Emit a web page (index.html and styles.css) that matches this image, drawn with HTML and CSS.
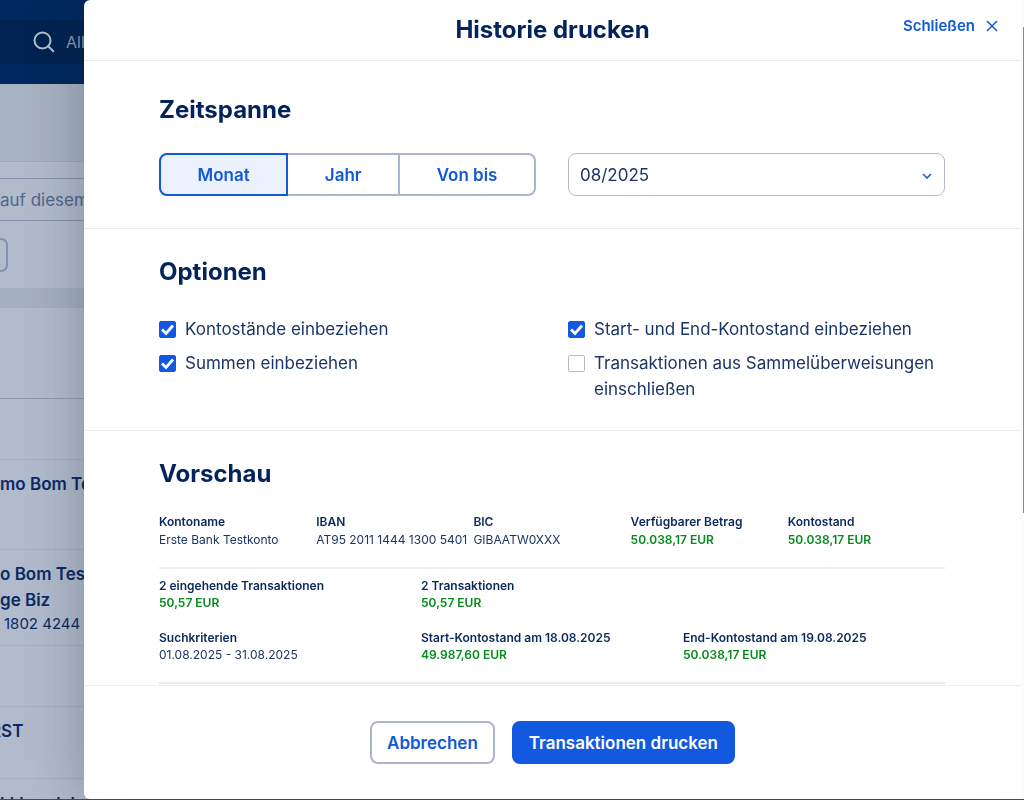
FILE: index.html
```html
<!DOCTYPE html>
<html lang="de">
<head>
<meta charset="utf-8">
<title>Historie drucken</title>
<link rel="stylesheet" href="styles.css">
</head>
<body>
<div class="page">
  <div class="topbar">
    <div class="search">
      <svg class="search-icon" viewBox="0 0 22 22" aria-hidden="true"><circle cx="9.500" cy="9.500" r="8"/><path d="M15.300 15.300l5 5"/></svg>
      <span>All</span>
    </div>
  </div>
  <div class="banner"></div>
  <div class="filters">
    <div class="filter-input">auf diesem</div>
    <div class="filter-chip"></div>
  </div>
  <div class="spacer"></div>
  <ul class="rows">
    <li class="row row-head"></li>
    <li class="row row-date"></li>
    <li class="row row-single"><strong>mo Bom Te</strong></li>
    <li class="row row-multi"><strong>o Bom Test</strong><strong>ge Biz</strong><span>1802 4244</span></li>
    <li class="row row-date"></li>
    <li class="row row-short"><strong>RST</strong></li>
    <li class="row row-last"><strong>kkhandeln</strong></li>
  </ul>
</div>

<div class="dialog" role="dialog" aria-labelledby="dialog-title">
  <header class="dialog-header">
    <h1 id="dialog-title">Historie drucken</h1>
    <button class="close" type="button">Schließen
      <svg viewBox="0 0 12 12" aria-hidden="true"><path d="M1 1l10 10M11 1L1 11"/></svg>
    </button>
  </header>
  <main class="dialog-body">
    <section class="section section-first">
      <h2>Zeitspanne</h2>
      <div class="columns">
        <div class="segments">
          <button class="segment active" type="button" aria-pressed="true">Monat</button>
          <button class="segment" type="button">Jahr</button>
          <button class="segment" type="button">Von bis</button>
        </div>
        <div class="select-wrap">
          <select aria-label="Monat"><option>08/2025</option></select>
          <svg class="chevron" viewBox="0 0 10 6" aria-hidden="true"><path d="M1 1l4 4 4-4"/></svg>
        </div>
      </div>
    </section>
    <section class="section">
      <h2>Optionen</h2>
      <div class="columns options">
        <label class="option"><input type="checkbox" checked><svg viewBox="0 0 17 17" aria-hidden="true"><path d="M3 8.500l4 4 7-8"/></svg><span>Kontostände einbeziehen</span></label>
        <label class="option"><input type="checkbox" checked><svg viewBox="0 0 17 17" aria-hidden="true"><path d="M3 8.500l4 4 7-8"/></svg><span>Start- und End-Kontostand einbeziehen</span></label>
        <label class="option"><input type="checkbox" checked><svg viewBox="0 0 17 17" aria-hidden="true"><path d="M3 8.500l4 4 7-8"/></svg><span>Summen einbeziehen</span></label>
        <label class="option"><input type="checkbox"><span>Transaktionen aus Sammelüberweisungen einschließen</span></label>
      </div>
    </section>
    <section class="section section-preview">
      <h2>Vorschau</h2>
      <dl class="facts facts-five">
        <div><dt>Kontoname</dt><dd>Erste Bank Testkonto</dd></div>
        <div><dt>IBAN</dt><dd>AT95 2011 1444 1300 5401</dd></div>
        <div><dt>BIC</dt><dd>GIBAATW0XXX</dd></div>
        <div><dt>Verfügbarer Betrag</dt><dd class="amount">50.038,17 EUR</dd></div>
        <div><dt>Kontostand</dt><dd class="amount">50.038,17 EUR</dd></div>
      </dl>
      <dl class="facts facts-three">
        <div><dt>2 eingehende Transaktionen</dt><dd class="amount">50,57 EUR</dd></div>
        <div class="span-two"><dt>2 Transaktionen</dt><dd class="amount">50,57 EUR</dd></div>
        <div><dt>Suchkriterien</dt><dd>01.08.2025 - 31.08.2025</dd></div>
        <div><dt>Start-Kontostand am 18.08.2025</dt><dd class="amount">49.987,60 EUR</dd></div>
        <div><dt>End-Kontostand am 19.08.2025</dt><dd class="amount">50.038,17 EUR</dd></div>
      </dl>
    </section>
  </main>
  <footer class="dialog-footer">
    <button class="btn" type="button">Abbrechen</button>
    <button class="btn btn-primary" type="button">Transaktionen drucken</button>
  </footer>
</div>
<div class="scrollbar" aria-hidden="true"><div class="thumb"></div></div>
</body>
</html>
```

FILE: styles.css
```css
* { box-sizing: border-box; }
body {
  margin: 0;
  height: 100vh;
  overflow: hidden;
  background: #4d4f55;
  color: #1b3566;
  font-family: Inter, sans-serif;
  font-size: 17px;
  line-height: 26px;
}
button, select, input { font: inherit; color: inherit; margin: 0; }
h1, h2, dl, dd, ul { margin: 0; padding: 0; }
h1, h2 { color: #02235b; font-size: 24px; font-weight: 650; line-height: 30px; }
svg { fill: none; stroke: currentColor; }

/* Account page under the dialog */
.page {
  height: calc(100vh - 1px);
  overflow: hidden;
  background: #b1bbcc;
  color: #0b2a63;
  white-space: nowrap;
}
.topbar { padding: 20px 0; background: #01285e; }
.search {
  display: flex;
  align-items: center;
  gap: 11px;
  height: 44px;
  padding-left: 33px;
  background: #012351;
  color: #8f9bb0;
  font-size: 16px;
}
.search-icon { width: 22px; height: 22px; stroke: #b4c0d0; stroke-width: 2; stroke-linecap: round; }
.banner { height: 78px; background: #a7b2c2; border-bottom: 1px solid #9ea9b8; }
.filters { padding: 16px 0; }
.filter-input {
  height: 43px;
  border: solid #8493ad;
  border-width: 1px 0;
  color: #52658a;
  line-height: 42px;
}
.filter-chip {
  width: 8px;
  height: 34px;
  margin-top: 17px;
  border: solid #8092b2;
  border-width: 2px 2px 2px 0;
  border-radius: 0 7px 7px 0;
}
.spacer { height: 20px; background: #a4afc0; }
.rows { list-style: none; }
.row { display: flex; flex-direction: column; border-bottom: 1px solid #a3aebf; }
.row strong { font-weight: 600; }
.row-head { height: 91px; border-color: #8d9ab0; }
.row-date { height: 61px; }
.row-single { height: 90px; padding-top: 11px; }
.row-multi { padding: 11px 0; }
.row-multi span { padding-left: 4px; font-size: 15px; line-height: 21px; }
.row-short { height: 72px; margin-left: -10px; padding-top: 11px; }
.row-last { padding-top: 12px; }

/* Dialog */
.dialog {
  position: fixed;
  inset: 0 3px 1px 84px;
  display: grid;
  grid-template-rows: auto 1fr auto;
  background: #fff;
  border-radius: 6px 0 0 6px;
  box-shadow: 0 0 56px rgba(20, 30, 50, .3);
}
.dialog-header {
  display: grid;
  grid-template-columns: 1fr auto 1fr;
  padding: 15px 23px;
  border-bottom: 1px solid #ececef;
}
.dialog-header h1 { grid-column: 2; }
.close {
  display: flex;
  align-items: center;
  justify-self: end;
  gap: 11px;
  height: 22px;
  padding: 0;
  border: 0;
  background: none;
  color: #1259d6;
  font-size: 15px;
  font-weight: 600;
}
.close svg { width: 12px; height: 12px; stroke-width: 1.5; }
.dialog-body { overflow: hidden; }
.section { padding: 28px 76px 28px 75px; border-bottom: 1px solid #ececef; }
.section-first { padding-top: 34px; padding-bottom: 32px; }
.section-preview { padding-bottom: 0; border: 0; }
.columns { display: grid; grid-template-columns: 1fr 1fr; column-gap: 32px; margin-top: 28px; }
.segments { display: flex; height: 43px; }
.segment {
  flex: 1 1 auto;
  padding: 0 24px;
  border: 2px solid #a9b6cd;
  border-left-width: 0;
  background: #fff;
  color: #1259d6;
  font-weight: 600;
}
.segment.active {
  border: 2px solid #1259d6;
  border-radius: 8px 0 0 8px;
  background: #ebf2fd;
}
.segment:last-child { border-radius: 0 8px 8px 0; }
.select-wrap { position: relative; }
.select-wrap select {
  width: 100%;
  height: 43px;
  padding: 0 11px;
  border: 1px solid #b4bccb;
  border-radius: 8px;
  background: #fff;
  appearance: none;
}
.chevron { position: absolute; top: 20px; right: 13px; width: 10px; height: 6px; stroke: #1259d6; stroke-width: 1.6; pointer-events: none; }
.options { row-gap: 8px; margin-top: 29px; }
.option { display: grid; grid-template-columns: 17px 1fr; column-gap: 9px; }
.option > * { grid-row: 1; }
.option input {
  grid-column: 1;
  width: 17px;
  height: 17px;
  margin-top: 5px;
  border: 1px solid #b3bccb;
  border-radius: 2px;
  background: #fff;
  appearance: none;
}
.option input:checked { border-color: #1259e0; background: #1259e0; }
.option svg { grid-column: 1; width: 17px; height: 17px; margin-top: 5px; stroke: #fff; stroke-width: 2.8; pointer-events: none; z-index: 1; }
.option span { grid-column: 2; }

.facts { display: grid; border-bottom: 2px solid #ececee; font-size: 12px; line-height: 17px; white-space: nowrap; }
.facts dt { color: #0a285c; font-weight: 600; }
.facts .amount { color: #078a1c; font-weight: 600; }
.facts-five { grid-template-columns: repeat(5, 1fr); margin-top: 24px; padding-bottom: 18px; line-height: 18px; }
.facts-three { grid-template-columns: repeat(3, 1fr); row-gap: 18px; padding: 8px 0 19px; }
.span-two { grid-column: span 2; }

.dialog-footer {
  display: flex;
  justify-content: center;
  gap: 17px;
  padding: 35px 24px;
  border-top: 1px solid #ececef;
}
.btn {
  height: 43px;
  padding: 0 15px;
  border: 2px solid #a9b6cd;
  border-radius: 8px;
  background: #fff;
  color: #1259d6;
  font-weight: 600;
}
.btn-primary { border-color: #1259e0; background: #1259e0; color: #fff; }

/* Page scrollbar */
.scrollbar { position: fixed; inset: 0 0 1px auto; width: 3px; padding-top: 27px; background: #fcfcfc; }
.thumb { width: 1px; height: 486px; margin-left: auto; background: #8b8b8b; }
```
